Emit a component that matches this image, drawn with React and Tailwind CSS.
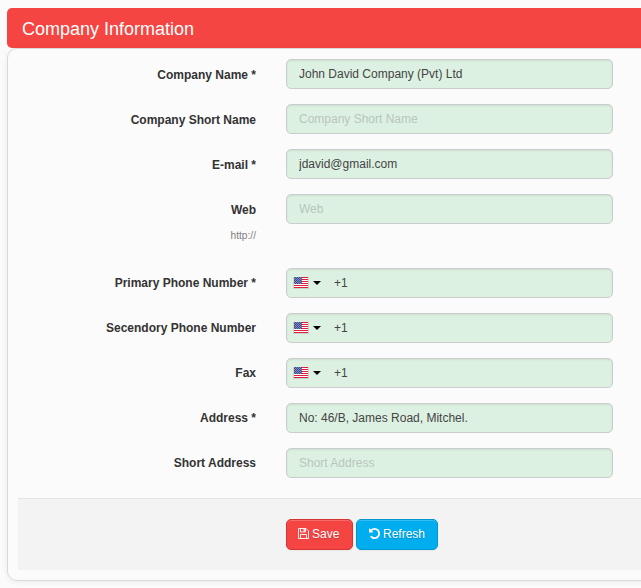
import React from 'react';

const inputClass =
  'block h-[30px] w-[327px] rounded-[5px] border border-[#cccccc] bg-[#ddf1e2] pb-px text-[12px] leading-[18px] text-[#444444] outline-none placeholder:text-[#b8c6bc] shadow-[inset_0_1px_2px_rgba(0,0,0,0.08)]';

function Flag() {
  return (
    <svg className="h-3 w-4" viewBox="0 0 16 12" shapeRendering="crispEdges" aria-hidden="true">
      <rect x="0" y="0" width="16" height="12" fill="#777" opacity="0.22" />
      <rect x="1" y="0" width="14" height="11" fill="#fff" />
      {[0, 2, 4, 6, 8, 10].map((y) => (
        <rect key={y} x="1" y={y} width="14" height="1" fill="#e0203a" />
      ))}
      <rect x="1" y="0" width="8" height="7" fill="#3f4a8c" />
      {[0, 1, 2, 3, 4, 5, 6].map((y) =>
        [0, 1, 2, 3].map((x) => (
          <rect key={`${x}-${y}`} x={1 + x * 2 + (y % 2)} y={y} width="1" height="1" fill="#8189b8" />
        ))
      )}
    </svg>
  );
}

function Row({ label, value, placeholder, hint, phone, raised }) {
  return (
    <div className={hint ? 'flex h-[74px]' : 'flex h-[45px]'}>
      <div className={`w-[238px] shrink-0 text-right ${raised ? 'pt-[6px]' : 'pt-[7px]'}`}>
        <label className="block text-[12px] leading-[18px] font-bold text-[#333333]">{label}</label>
        {hint && <small className="mt-2 block text-[10.2px] leading-[18px] text-[#808080]">{hint}</small>}
      </div>
      <div className="ml-[30px]">
        {phone ? (
          <div className={`${inputClass} flex items-center`}>
            <span className="ml-[6px] flex items-center">
              <Flag />
              <svg className="ml-[4px] h-1 w-2" viewBox="0 0 8 4" aria-hidden="true">
                <path d="M0 0H8L4 4Z" fill="#000" />
              </svg>
            </span>
            <input aria-label={label} defaultValue="+1" className="ml-[13px] w-60 bg-transparent outline-none" />
          </div>
        ) : (
          <input aria-label={label} defaultValue={value} placeholder={placeholder} className={`${inputClass} px-3`} />
        )}
      </div>
    </div>
  );
}

const buttonClass =
  'flex h-[31px] items-center gap-[3px] rounded-[5px] border pb-[2px] text-[12px] leading-[18px] text-white [text-shadow:0_1px_1px_rgba(0,0,0,0.2)] shadow-[inset_0_1px_0_rgba(255,255,255,0.2),0_1px_2px_rgba(0,0,0,0.05)]';

export default function App() {
  return (
    <div className="h-[588px] w-[641px] overflow-hidden bg-[#fbfbfb] pt-2 pl-[7px] font-['Liberation_Sans',Arial,sans-serif]">
      <div className="w-[660px]">
        <h3 className="h-10 rounded-[5px] bg-[#f54542] pt-px pl-[15px] text-[18px] leading-10 font-normal text-white">
          Company Information
        </h3>
        <form className="h-[533px] rounded-[10px] border border-[#d9d9d9] px-[10px] pt-[10px] shadow-[0_1px_6px_rgba(0,0,0,0.07)]">
          <div className="h-[439px]">
            <Row label="Company Name *" value="John David Company (Pvt) Ltd" />
            <Row label="Company Short Name" placeholder="Company Short Name" />
            <Row label="E-mail *" value="jdavid@gmail.com" />
            <Row label="Web" placeholder="Web" hint="http://" />
            <Row label="Primary Phone Number *" phone raised />
            <Row label="Secendory Phone Number" phone raised />
            <Row label="Fax" phone raised />
            <Row label="Address *" value="No: 46/B, James Road, Mitchel." raised />
            <Row label="Short Address" placeholder="Short Address" raised />
          </div>
          <div className="flex h-[72px] gap-[3px] border-t border-[#e5e5e5] bg-[#f3f3f3] pt-5 pl-[268px]">
            <button type="button" className={`${buttonClass} w-[67px] border-[#d43434] bg-[#f54542] pl-[11px]`}>
              <svg className="size-[11px]" viewBox="0 0 11 11" fill="none" stroke="currentColor" strokeWidth="0.9" aria-hidden="true">
                <path d="M.5.5H8L10.5 3V10.5H.5Z M2.5.5V4H7.5V.5 M2.5 10.5V6.5H8.5V10.5" />
                <path d="M6.2 1V3.5" strokeWidth="1.2" />
              </svg>
              Save
            </button>
            <button type="button" className={`${buttonClass} w-[82px] border-[#0097d0] bg-[#00adef] pl-[12px]`}>
              <svg className="size-[11px]" viewBox="0 0 1536 1536" fill="currentColor" aria-hidden="true">
                <path d="M1536 768q0 156-61 298t-164 245-245 164-298 61q-172 0-327-72.500T177 1259q-7-10-6.500-22.500T179 1216l137-138q10-9 25-9 16 2 23 12 73 95 179 147t225 52q104 0 198.500-40.500T1130 1130t109.500-163.500T1280 768t-40.500-198.500T1130 406 966.500 296.500 768 256q-98 0-188 35.500T420 393l137 138q31 30 14 69-17 40-59 40H64q-26 0-45-19T0 576V128q0-42 40-59 39-17 69 14l130 129Q346 111 483.500 55.500T768 0q156 0 298 61t245 164 164 245 61 298z" />
              </svg>
              Refresh
            </button>
          </div>
        </form>
      </div>
    </div>
  );
}
